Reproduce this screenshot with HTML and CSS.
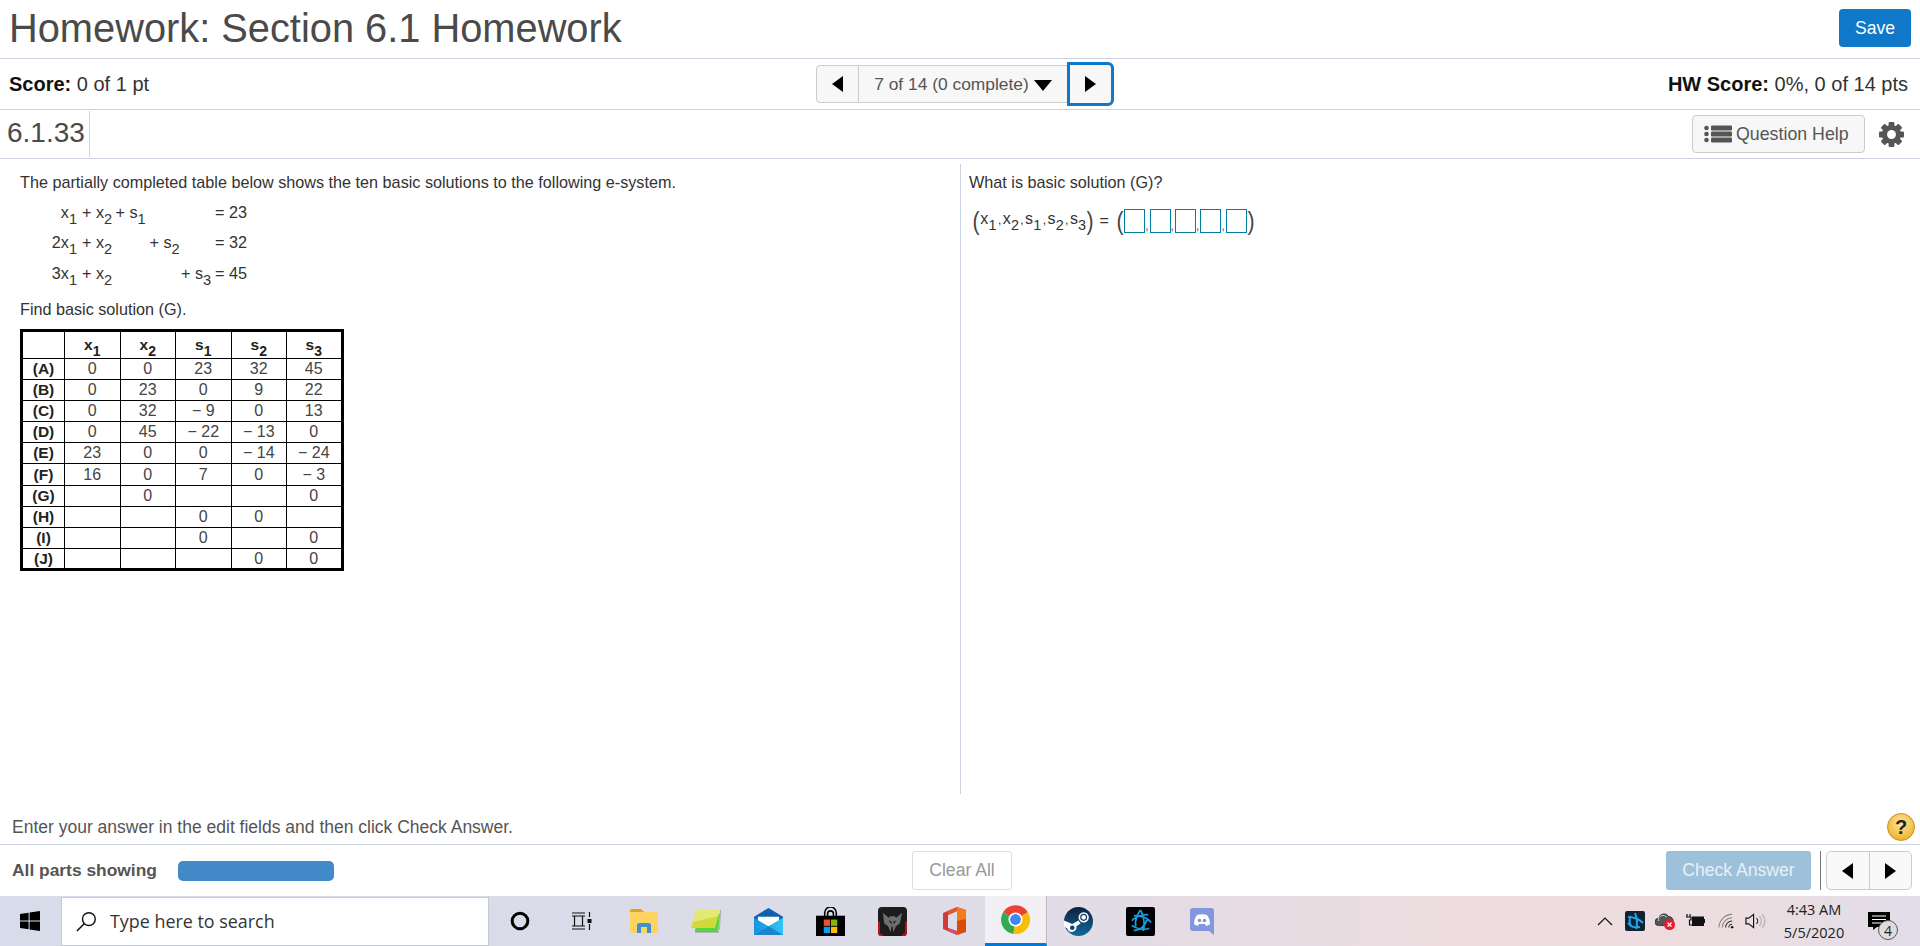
FILE: index.html
```html
<!DOCTYPE html>
<html lang="en">
<head>
<meta charset="utf-8">
<title>Homework: Section 6.1 Homework</title>
<link rel="stylesheet" href="styles.css">
</head>
<body>
<header class="title-bar">
  <h1 class="title">Homework: Section 6.1 Homework</h1>
  <button class="save">Save</button>
</header>
<div class="score-bar">
  <div class="score score-left"><b>Score:</b> 0 of 1 pt</div>
  <div class="pager">
    <button class="pg pg-prev"><span class="tri-left"></span></button>
    <button class="pg pg-label">7 of 14 (0 complete)<span class="tri-down"></span></button>
    <button class="pg pg-next"><span class="tri-right"></span></button>
  </div>
  <div class="score score-right"><b>HW Score:</b> 0%, 0 of 14 pts</div>
</div>
<div class="q-bar">
  <div class="q-num">6.1.33</div>
  <button class="help-btn">
    <svg class="help-icon" viewBox="0 0 28 18"><g fill="#555"><circle cx="2.5" cy="3" r="2.3"/><circle cx="2.5" cy="9" r="2.3"/><circle cx="2.5" cy="15" r="2.3"/><rect x="7" y="0.5" width="21" height="5" rx="1"/><rect x="7" y="6.5" width="21" height="5" rx="1"/><rect x="7" y="12.5" width="21" height="5" rx="1"/></g></svg>
    Question Help
  </button>
  <svg class="gear" viewBox="0 0 26 26"><g fill="#555"><rect x="10" y="0" width="6" height="26" rx="1"/><rect x="10" y="0" width="6" height="26" rx="1" transform="rotate(45 13 13)"/><rect x="10" y="0" width="6" height="26" rx="1" transform="rotate(90 13 13)"/><rect x="10" y="0" width="6" height="26" rx="1" transform="rotate(135 13 13)"/><circle cx="13" cy="13" r="10"/></g><circle cx="13" cy="13" r="4.6" fill="#fff"/></svg>
</div>
<main class="content">
  <section class="pane pane-left">
    <p class="para">The partially completed table below shows the ten basic solutions to the following e-system.</p>
    <div class="system">
      <span class="c1">x<sub>1</sub></span><span>+ x<sub>2</sub></span><span>+ s<sub>1</sub></span><span></span><span></span><span>= 23</span>
      <span class="c1">2x<sub>1</sub></span><span>+ x<sub>2</sub></span><span></span><span>+ s<sub>2</sub></span><span></span><span>= 32</span>
      <span class="c1">3x<sub>1</sub></span><span>+ x<sub>2</sub></span><span></span><span></span><span>+ s<sub>3</sub></span><span>= 45</span>
    </div>
    <p class="para para-find">Find basic solution (G).</p>
    <table class="sol">
      <colgroup><col class="w-a"><col class="w-b"><col class="w-b"><col class="w-b"><col class="w-b"><col class="w-b"></colgroup>
      <tr class="head"><th></th><th>x<sub>1</sub></th><th>x<sub>2</sub></th><th>s<sub>1</sub></th><th>s<sub>2</sub></th><th>s<sub>3</sub></th></tr>
      <tr><th>(A)</th><td>0</td><td>0</td><td>23</td><td>32</td><td>45</td></tr>
      <tr><th>(B)</th><td>0</td><td>23</td><td>0</td><td>9</td><td>22</td></tr>
      <tr><th>(C)</th><td>0</td><td>32</td><td>− 9</td><td>0</td><td>13</td></tr>
      <tr><th>(D)</th><td>0</td><td>45</td><td>− 22</td><td>− 13</td><td>0</td></tr>
      <tr><th>(E)</th><td>23</td><td>0</td><td>0</td><td>− 14</td><td>− 24</td></tr>
      <tr><th>(F)</th><td>16</td><td>0</td><td>7</td><td>0</td><td>− 3</td></tr>
      <tr><th>(G)</th><td></td><td>0</td><td></td><td></td><td>0</td></tr>
      <tr><th>(H)</th><td></td><td></td><td>0</td><td>0</td><td></td></tr>
      <tr><th>(I)</th><td></td><td></td><td>0</td><td></td><td>0</td></tr>
      <tr><th>(J)</th><td></td><td></td><td></td><td>0</td><td>0</td></tr>
    </table>
  </section>
  <section class="pane pane-right">
    <p class="para">What is basic solution (G)?</p>
    <div class="answer">
      <span class="paren">(</span><span class="vars">x<sub>1</sub><i>,</i>x<sub>2</sub><i>,</i>s<sub>1</sub><i>,</i>s<sub>2</sub><i>,</i>s<sub>3</sub></span><span class="paren">)</span>
      <span class="eq">=</span>
      <span class="paren paren-b">(</span><span class="box"></span><i class="comma">,</i><span class="box"></span><i class="comma">,</i><span class="box"></span><i class="comma">,</i><span class="box"></span><i class="comma">,</i><span class="box"></span><span class="paren">)</span>
    </div>
  </section>
</main>
<div class="hint">
  <span>Enter your answer in the edit fields and then click Check Answer.</span>
  <span class="qmark">?</span>
</div>
<div class="actions">
  <b class="parts">All parts showing</b>
  <span class="progress"></span>
  <button class="clear">Clear All</button>
  <button class="check">Check Answer</button>
  <span class="sep"></span>
  <div class="mini-pager">
    <button class="mini"><span class="tri-left"></span></button>
    <button class="mini"><span class="tri-right"></span></button>
  </div>
</div>
<footer class="taskbar">
  <div class="start">
    <svg class="ic-win" viewBox="0 0 20 20"><path d="M0 3l8.6-1.2v7.8H0zM9.6 1.6L20 0v9.6H9.6zM0 10.6h8.6v7.7L0 17zM9.6 10.6H20V20L9.6 18.5z" fill="#000"/></svg>
  </div>
  <div class="search">
    <svg class="ic-search" viewBox="0 0 22 22"><circle cx="13.5" cy="8.5" r="6.7" fill="none" stroke="#111" stroke-width="1.5"/><path d="M8.6 13.4L1 21" stroke="#111" stroke-width="1.7"/></svg>
    <span>Type here to search</span>
  </div>
  <div class="tile"><svg class="ic-cortana" viewBox="0 0 20 20"><circle cx="10" cy="10" r="7.8" fill="none" stroke="#000" stroke-width="3"/></svg></div>
  <div class="tile"><svg class="ic-md" viewBox="0 0 22 20"><g fill="none" stroke="#111" stroke-width="1.2"><path d="M1 2h13M1 18h13M3.5 5h8v10h-8zM1 5h2M1 15h2M12 5h2M12 15h2M18.5 1v5M18.5 13v6"/></g><rect x="16.5" y="8" width="4" height="4" fill="#111"/></svg></div>
  <div class="tile"><svg class="ic-folder" viewBox="0 0 28 24"><path d="M0 2a2 2 0 0 1 2-2h9l3 3h-14z" fill="#e2a21a"/><path d="M0 3h26a2 2 0 0 1 2 2v17a2 2 0 0 1-2 2H2a2 2 0 0 1-2-2z" fill="#fcd462"/><path d="M7 24v-8a2 2 0 0 1 2-2h10a2 2 0 0 1 2 2v8h-4v-6h-6v6z" fill="#3e92d2"/></svg></div>
  <div class="tile"><svg class="ic-notes" viewBox="0 0 30 24"><path d="M6 5h23l-2 18H4z" fill="#55d53f"/><path d="M4 23h24" stroke="#9a9a9a" stroke-width="1.2"/><path d="M29.5 1l-1 20" stroke="#aaa" stroke-width="1"/><path d="M5 1h24l-5 18H0z" fill="#d2d93a"/><path d="M5 1h24l-2 6L2 13z" fill="#e4e874"/></svg></div>
  <div class="tile"><svg class="ic-lg" viewBox="0 0 30 28"><defs><linearGradient id="mail" x1="0" y1="0" x2="1" y2="0"><stop offset="0" stop-color="#1594dd"/><stop offset="1" stop-color="#30c5f7"/></linearGradient></defs><path d="M15 0L30 9v10H0V9z" fill="#0f62ad"/><path d="M4 9h22v5l-11 7-11-7z" fill="#fff"/><path d="M0 10l15 9 15-9v18H0z" fill="url(#mail)"/><path d="M0 28l15-9 15 9z" fill="#1a84cf"/></svg></div>
  <div class="tile"><svg class="ic-lg" viewBox="0 0 30 30"><path d="M0 9h30v21H0z" fill="#000"/><path d="M9 11V6a6 6 0 0 1 12 0v5M12 11V7a3 3 0 0 1 6 0v4" fill="none" stroke="#000" stroke-width="1.6"/><rect x="8" y="13" width="6.5" height="6.5" fill="#f25022"/><rect x="15.5" y="13" width="6.5" height="6.5" fill="#7fba00"/><rect x="8" y="20.5" width="6.5" height="6.5" fill="#00a4ef"/><rect x="15.5" y="20.5" width="6.5" height="6.5" fill="#ffb900"/></svg></div>
  <div class="tile"><svg class="ic-lg" viewBox="0 0 30 30"><rect width="30" height="30" rx="4" fill="#1c1c1c"/><path d="M1 15v11q0 3 4 3M29 15v11q0 3-4 3" fill="none" stroke="#b8141c" stroke-width="2"/><path d="M5 6l6 5 2.5-2 1.5 1 1.5-1 2.5 2 6-5-2.5 11-4 3-2.5 6-1-6h-1l-1 6-2.5-6-4-3z" fill="#6f6f6f"/><path d="M11 14l3 4v-3zM19 14l-3 4v-3z" fill="#1c1c1c"/></svg></div>
  <div class="tile"><svg class="ic-office" viewBox="0 0 23 28"><path d="M14 0l9 3v22l-9 3z" fill="#dc4a0a"/><path d="M14 0l9 3v9l-9 2z" fill="#ef7d1a"/><path d="M14 0L0 6v16l14 6v-4L5 21V8l9-4z" fill="#cf3a3a"/><path d="M14 0L5 4v4l9-4z" fill="#e8572a"/><path d="M5 21v3l9 4v-4z" fill="#e04a6a"/></svg></div>
  <div class="tile tile-active"><svg class="ic-lg" viewBox="0 0 28 28"><path d="M14 14L2 7a14 14 0 0 1 24 0z" fill="#ea4335"/><path d="M14 14L2 7a14 14 0 0 0 10 21z" fill="#34a853"/><path d="M14 14l12-7a14 14 0 0 1-14 21z" fill="#fbbc05"/><circle cx="14" cy="14" r="6.8" fill="#fff"/><circle cx="14" cy="14" r="5.2" fill="#4285f4"/></svg></div>
  <div class="tile"><svg class="ic-lg" viewBox="0 0 28 28"><defs><linearGradient id="stm" x1="0" y1="0" x2="0" y2="1"><stop offset="0" stop-color="#0e1f3f"/><stop offset="1" stop-color="#0f6aa0"/></linearGradient></defs><circle cx="14" cy="14" r="14" fill="url(#stm)"/><circle cx="19" cy="10" r="4.2" fill="none" stroke="#fff" stroke-width="1.6"/><circle cx="19" cy="10" r="2.2" fill="#fff"/><path d="M0 13l8 3.5 6-3.5 2 3-4 2.5a4.5 4.5 0 0 1-9 2L0 19z" fill="#fff"/><circle cx="8" cy="20" r="2.2" fill="#12406e"/></svg></div>
  <div class="tile"><svg class="ic-lg" viewBox="0 0 30 30"><rect width="30" height="30" rx="2" fill="#000"/><g fill="none" stroke="#159fe6" stroke-width="1.8"><path d="M15 3c3 6 5 13 3 22M8 9c6 0 14 2 18 7M24 22c-5 2-13 1-18-3M15 3c-3 4-6 11-5 17M6 14c3-3 10-7 17-6M8 24c6 1 12-4 14-12"/></g></svg></div>
  <div class="tile"><svg class="ic-discord" viewBox="0 0 24 27"><path d="M3 0h18a3 3 0 0 1 3 3v24l-5-4H3a3 3 0 0 1-3-3V3a3 3 0 0 1 3-3z" fill="#8297dd"/><path d="M7 7c3-1 7-1 10 0 2 2.5 3 6 3 9-1 1-3 1.8-4 1.8l-1-1.8H9l-1 1.8c-1 0-3-.8-4-1.8 0-3 1-6.5 3-9z" fill="#fff"/><circle cx="9.5" cy="12.5" r="1.8" fill="#8297dd"/><circle cx="14.5" cy="12.5" r="1.8" fill="#8297dd"/></svg></div>
  <div class="tray">
    <svg class="ic-caret" viewBox="0 0 16 9"><path d="M1 8l7-7 7 7" fill="none" stroke="#111" stroke-width="1.2"/></svg>
    <svg class="ic-tray" viewBox="0 0 20 20"><rect width="20" height="20" rx="2" fill="#123"/><g fill="none" stroke="#1fa6ee" stroke-width="2"><path d="M10 2c2 5 3 10 1 16M3 6c6 0 11 2 15 6M15 16c-4 1-9 0-12-4M6 5c-2 3-2 6 0 10"/></g></svg>
    <svg class="ic-tray" viewBox="0 0 22 20"><path d="M4 15a4 4 0 0 1 0-8 6 6 0 0 1 11-2 5 5 0 0 1 5 5v3l-6 2z" fill="#555" stroke="#222" stroke-width=".8"/><path d="M4 10a5 5 0 0 1 9-4" stroke="#ddd" fill="none"/><circle cx="16" cy="14" r="6" fill="#e0202a"/><path d="M13.8 11.8l4.4 4.4m0-4.4l-4.4 4.4" stroke="#fff" stroke-width="1.5"/></svg>
    <svg class="ic-tray" viewBox="0 0 20 14"><path d="M2 0v3M5 0v3M1 3h5v3H4.5v5H7" fill="none" stroke="#111" stroke-width="1.2"/><rect x="7" y="2.5" width="12" height="9.5" fill="#111"/><rect x="19" y="5" width="1" height="4" fill="#111"/></svg>
    <svg class="ic-wifi" viewBox="0 0 18 16"><g fill="none" stroke="#888" stroke-width="1.1"><path d="M1 15a14 14 0 0 1 14-14M4.5 15A10.5 10.5 0 0 1 15 4.5"/></g><path d="M8 15a7 7 0 0 1 7-7M11.5 15a3.5 3.5 0 0 1 3.5-3.5" fill="none" stroke="#333" stroke-width="1.1"/><circle cx="15" cy="14.5" r="1.3" fill="#111"/></svg>
    <svg class="ic-speaker" viewBox="0 0 22 16"><path d="M1 5h3l5-4v14l-5-4H1z" fill="none" stroke="#111" stroke-width="1.2"/><path d="M12 5a4 4 0 0 1 0 6" fill="none" stroke="#222" stroke-width="1.1"/><path d="M15 3a7 7 0 0 1 0 10M18 1a10 10 0 0 1 0 14" fill="none" stroke="#aaa" stroke-width="1.1"/></svg>
    <div class="clock"><span>4:43 AM</span><span>5/5/2020</span></div>
    <div class="notif">
      <svg class="ic-notif" viewBox="0 0 22 18"><path d="M0 0h22v15H9l-4 3v-3H0z" fill="#000"/><path d="M4 4h14M4 7.5h14M4 11h10" stroke="#fff" stroke-width="1.2"/></svg>
      <span class="badge">4</span>
    </div>
  </div>
</footer>
</body>
</html>
```
FILE: styles.css
```css
* { box-sizing: border-box; }
html, body { margin: 0; height: 946px; }
body {
  display: flex;
  flex-direction: column;
  overflow: hidden;
  background: #fff;
  font-family: "Liberation Sans", Arial, sans-serif;
  color: #333;
}
button { font-family: inherit; cursor: default; }

.title-bar {
  height: 59px;
  flex: none;
  display: flex;
  justify-content: space-between;
  align-items: flex-start;
  padding: 8px 9px 0 9px;
  border-bottom: 1px solid #ccd3e0;
}
.title { margin: 0; font-size: 39.8px; line-height: 40px; font-weight: 400; color: #4a4a4a; }
.save {
  width: 72px; height: 38px;
  margin-top: 1px;
  background: #0f78c8; color: #fff;
  border: 0; border-radius: 4px;
  font-size: 17.6px;
}

.score-bar {
  height: 51px;
  flex: none;
  display: flex;
  align-items: center;
  padding: 0 12px 0 9px;
  border-bottom: 1px solid #ccd3e0;
}
.score { font-size: 20px; color: #333; }
.score-left { width: 807px; flex: none; }
.score-right { margin-left: auto; }
.score b { color: #111; }
.pager { display: flex; height: 38px; align-items: center; }
.pg {
  height: 38px; padding: 0;
  background: #f7f7f7;
  border: 1px solid #ccc;
  color: #555;
  font-size: 17.4px;
  display: flex; align-items: center; justify-content: center;
}
.pg-prev { width: 43px; border-radius: 4px 0 0 4px; }
.pg-label { width: 208px; border-left: 0; border-right: 0; }
.pg-next {
  width: 47px; height: 44px;
  border: 3px solid #0f78c8;
  border-radius: 0 6px 6px 0;
}
.tri-left, .tri-right, .tri-down { display: inline-block; width: 0; height: 0; }
.tri-left { border-top: 8px solid transparent; border-bottom: 8px solid transparent; border-right: 11px solid #000; }
.tri-right { border-top: 8px solid transparent; border-bottom: 8px solid transparent; border-left: 11px solid #000; }
.tri-down { border-left: 9px solid transparent; border-right: 9px solid transparent; border-top: 11px solid #000; margin-left: 5px; margin-top: 3px; }

.q-bar {
  height: 49px;
  flex: none;
  display: flex;
  align-items: center;
  padding: 0 16px 0 7px;
  border-bottom: 1px solid #ccd3e0;
}
.q-num {
  font-size: 28px; color: #4a4a4a;
  width: 83px; height: 46px; line-height: 44px;
  border-right: 1px solid #ccd3e0;
  margin-right: auto;
}
.help-btn {
  width: 173px; height: 38px;
  background: #f7f7f7;
  border: 1px solid #ccc; border-radius: 4px;
  color: #555; font-size: 17.8px;
  display: flex; align-items: center; gap: 4px;
  padding: 0 0 0 11px;
  margin-right: 14px;
}
.help-icon { width: 28px; height: 18px; flex: none; }
.gear { width: 25px; height: 25px; }

.content { flex: 1; display: flex; min-height: 0; padding: 5px 0 4px; }
.pane { height: 100%; }
.pane-left { width: 961px; padding: 9px 0 0 20px; border-right: 1px solid #ccd3e0; }
.pane-right { flex: 1; padding: 9px 0 0 8px; }
.para { margin: 0; font-size: 16.2px; line-height: 18px; color: #333; }
.para-find { margin-top: 11px; }
sub { font-size: 0.9em; line-height: 0; vertical-align: -0.4em; }

.system {
  display: grid;
  grid-template-columns: 62px 33.5px 34px 31.5px 34px 36px;
  grid-auto-rows: 30.5px;
  margin-top: 6px;
  font-size: 16.2px;
  color: #333;
  align-items: center;
}
.system .c1 { text-align: right; padding-right: 5px; }
.system span { white-space: nowrap; }

.sol {
  margin-top: 11px;
  border-collapse: collapse;
  border: 3px solid #000;
  table-layout: fixed;
  width: 321.5px;
  font-size: 16px;
  color: #444;
  text-align: center;
}
.w-a { width: 43px; }
.w-b { width: 55.5px; }
.sol th, .sol td { border: 1px solid #000; padding: 0; height: 21.2px; line-height: 18px; }
.sol th { color: #222; font-weight: 700; font-size: 15.5px; }
.sol .head th { height: 28px; }

.answer {
  margin: 18px 0 0 3px;
  display: flex;
  align-items: center;
  height: 24px;
  font-size: 16px;
  color: #333;
}
.paren { font-size: 25px; line-height: 24px; color: #444; display: inline-block; transform: scaleX(.85); }
.paren-b { margin-left: 3px; }
.vars { white-space: nowrap; position: relative; top: -2px; letter-spacing: 0.15px; }
.vars i, .comma { font-style: normal; font-size: 12px; }
.vars i { margin: 0 1.3px; }
.eq { margin: 0 4px 0 5px; }
.box { width: 21px; height: 24px; border: 1px solid #007fa3; flex: none; }
.comma { width: 4.4px; align-self: flex-end; line-height: 13px; color: #555; }

.hint {
  flex: none;
  height: 47px;
  display: flex;
  justify-content: space-between;
  align-items: center;
  padding: 12px 5px 0 12px;
  font-size: 17.5px;
  color: #555;
  border-bottom: 1px solid #ccd3e0;
}
.qmark {
  width: 28px; height: 28px; border-radius: 50%;
  background: radial-gradient(circle at 50% 35%, #ffe79a, #f1b93a 70%, #d99a1e);
  border: 1px solid #c78f20;
  color: #222; font-weight: 700; font-size: 20px;
  display: flex; align-items: center; justify-content: center;
}

.actions {
  flex: none;
  height: 51px;
  display: flex;
  align-items: center;
  padding: 0 8px 0 12px;
}
.parts { font-size: 17.4px; color: #555; width: 166px; }
.progress { width: 156px; height: 20px; background: #4189c7; border-radius: 5px; }
.clear {
  width: 100px; height: 39px;
  margin-left: 578px;
  background: #fff;
  border: 1px solid #ddd; border-radius: 3px;
  color: #999; font-size: 17.6px;
}
.check {
  width: 145px; height: 39px;
  margin-left: auto;
  background: #9dc1db; color: #e9f0f6;
  border: 0; border-radius: 3px;
  font-size: 17.6px; font-weight: 400;
}
.sep { width: 1px; height: 39px; background: #777; margin: 0 5px 0 9px; }
.mini-pager { display: flex; width: 86px; height: 39px; background: #f9f9f9; border: 1px solid #ccc; border-radius: 5px; }
.mini { flex: 1; background: none; border: 0; padding: 0; display: flex; align-items: center; justify-content: center; }
.mini + .mini { border-left: 1px solid #ccc; }

.taskbar {
  flex: none;
  height: 50px;
  display: flex;
  align-items: center;
  background: linear-gradient(90deg, #d8dbe9 0%, #dcdce8 45%, #ecdce0 75%, #ecdde0 90%, #e1dde9 100%);
}
.start { width: 61px; display: flex; justify-content: center; padding-right: 2px; }
.ic-win { width: 20px; height: 20px; }
.search {
  width: 428px; height: 49px;
  background: #fff;
  border: 1px solid #c8c8cf;
  display: flex; align-items: center;
  padding-left: 14px;
  font-family: "Open Sans", sans-serif;
  font-size: 17.9px;
  color: #333;
}
.ic-search { width: 21px; height: 21px; margin-right: 13px; }
.tile { width: 62px; height: 50px; flex: none; display: flex; align-items: center; justify-content: center; }
.tile-active { background: #f0eff4; border-bottom: 3px solid #0078d7; border-right: 1px solid #bbb; }
.ic-cortana { width: 20px; height: 20px; }
.ic-md { width: 22px; height: 20px; }
.ic-folder { width: 28px; height: 24px; }
.ic-notes { width: 30px; height: 24px; }
.ic-lg { width: 29px; height: 29px; }
.ic-office { width: 23px; height: 28px; }
.ic-discord { width: 24px; height: 27px; }
.tray { flex: 1; display: flex; align-items: center; padding-left: 364px; height: 100%; }
.ic-caret { width: 16px; height: 9px; margin-right: 12px; }
.ic-tray { width: 20px; height: 20px; margin-right: 10px; }
.ic-wifi { width: 17px; height: 16px; margin: 0 10px 0 3px; }
.ic-speaker { width: 21px; height: 16px; }
.clock {
  display: flex; flex-direction: column; align-items: center; gap: 4px;
  width: 64px; margin-left: 16px;
  font-family: "Open Sans", sans-serif; font-size: 14.5px; color: #222; line-height: 19px;
}
.notif { position: relative; margin-left: 22px; width: 22px; height: 18px; }
.ic-notif { width: 22px; height: 18px; display: block; }
.badge {
  position: absolute; left: 10px; top: 8px;
  width: 20px; height: 20px; border-radius: 50%;
  background: #ddd; border: 1px solid #555;
  font-family: "Open Sans", sans-serif; font-size: 14px; color: #222;
  display: flex; align-items: center; justify-content: center;
}
```
